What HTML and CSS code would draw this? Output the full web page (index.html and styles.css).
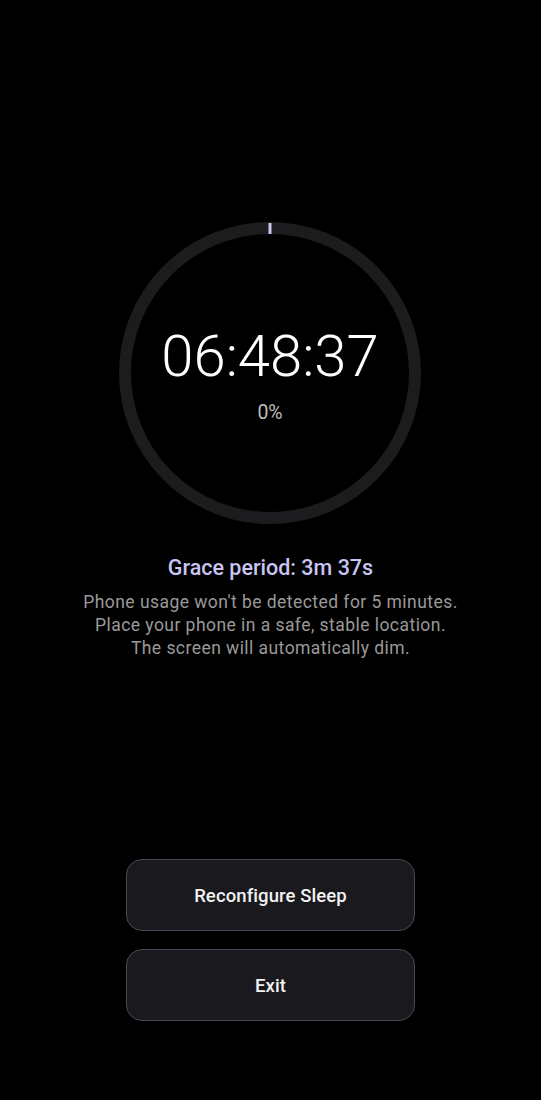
FILE: index.html
```html
<!DOCTYPE html>
<html>
<head>
<meta charset="utf-8">
<link rel="stylesheet" href="styles.css">
</head>
<body>
<main class="screen">
  <section class="timer">
    <svg class="ring" width="302" height="302" viewBox="0 0 302 302">
      <circle cx="151" cy="151" r="145" fill="none" stroke="#1c1c1e" stroke-width="12"/>
      <rect x="149.5" y="1" width="3" height="11" fill="#c9c5f2"/>
    </svg>
    <div class="readout">
      <div class="time">06:48:37</div>
      <div class="percent">0%</div>
    </div>
  </section>
  <section class="info">
    <h2 class="grace">Grace period: 3m 37s</h2>
    <p class="desc">Phone usage won't be detected for 5 minutes.<br>Place your phone in a safe, stable location.<br>The screen will automatically dim.</p>
  </section>
  <section class="actions">
    <button class="btn">Reconfigure Sleep</button>
    <button class="btn">Exit</button>
  </section>
</main>
</body>
</html>
```

FILE: styles.css
```css
html, body {
  margin: 0;
  padding: 0;
  background: #000;
}
body {
  width: 541px;
  height: 1100px;
  font-family: Roboto, "Noto Sans", sans-serif;
  color: #fff;
  overflow: hidden;
}
.screen {
  display: flex;
  flex-direction: column;
  align-items: center;
  padding-top: 222px;
}
.timer {
  position: relative;
  width: 302px;
  height: 302px;
  margin-left: -1px;
}
.ring {
  display: block;
}
.readout {
  position: absolute;
  inset: 0;
  display: flex;
  flex-direction: column;
  align-items: center;
  justify-content: center;
}
.time {
  font-weight: 300;
  font-size: 58px;
  line-height: 66px;
  color: #fff;
  margin-top: 2px;
}
.percent {
  font-size: 19.5px;
  line-height: 24px;
  color: #bdbdbd;
  margin-top: 12px;
}
.info {
  display: flex;
  flex-direction: column;
  align-items: center;
  margin-top: 31px;
}
.grace {
  margin: 0;
  font-size: 21.5px;
  line-height: 26px;
  font-weight: 500;
  color: #c9c5f2;
}
.desc {
  margin: 10px 0 0;
  text-align: center;
  font-size: 17.5px;
  line-height: 23px;
  letter-spacing: 0.45px;
  color: #9a9a9a;
}
.actions {
  display: flex;
  flex-direction: column;
  gap: 18px;
  margin-top: 199px;
}
.btn {
  width: 289px;
  height: 72px;
  border-radius: 16px;
  border: 1px solid #4a4852;
  background: #1a191e;
  color: #f2f2f2;
  font-family: Roboto, "Noto Sans", sans-serif;
  font-size: 18.5px;
  font-weight: 500;
  letter-spacing: 0.1px;
  padding: 2px 0 0;
}
```
